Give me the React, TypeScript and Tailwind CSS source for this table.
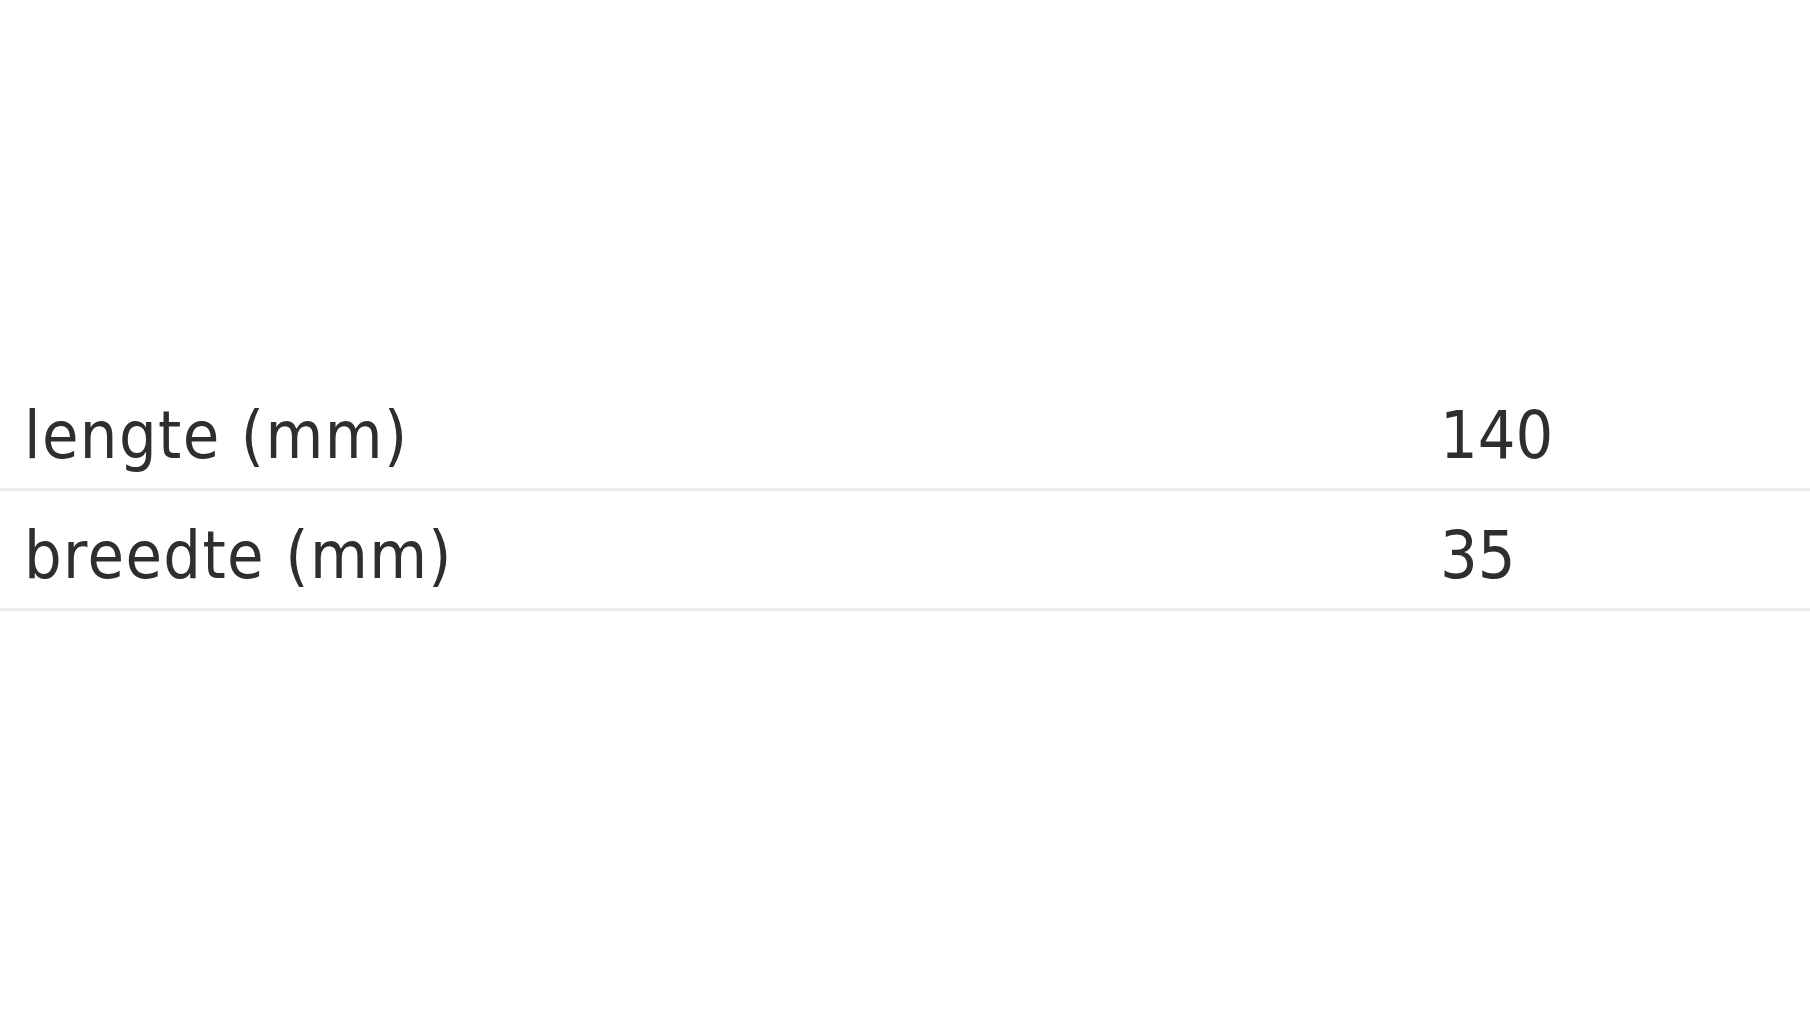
import React from "react";

// Product specification rows (Dutch labels)
const SPECS = [
  { label: "lengte (mm)", value: "140" },
  { label: "breedte (mm)", value: "35" },
];

const App: React.FC = () => {
  return (
    <div className="min-h-screen w-full bg-white pt-[371px] text-[#2e2e2e] [font-family:'DejaVu_Sans_Condensed','DejaVu_Sans',sans-serif]">
      <div className="flex flex-col">
        {SPECS.map((row) => (
          <div
            key={row.label}
            className="grid grid-cols-[1420px_1fr] border-b-[3px] border-[#ececec] pt-[26px] pb-[14px] text-[66px] leading-[77px]"
          >
            <span className="pl-[24px] tracking-[1.4px]">{row.label}</span>
            <span className="pl-[20px]">{row.value}</span>
          </div>
        ))}
      </div>
    </div>
  );
};

export default App;
